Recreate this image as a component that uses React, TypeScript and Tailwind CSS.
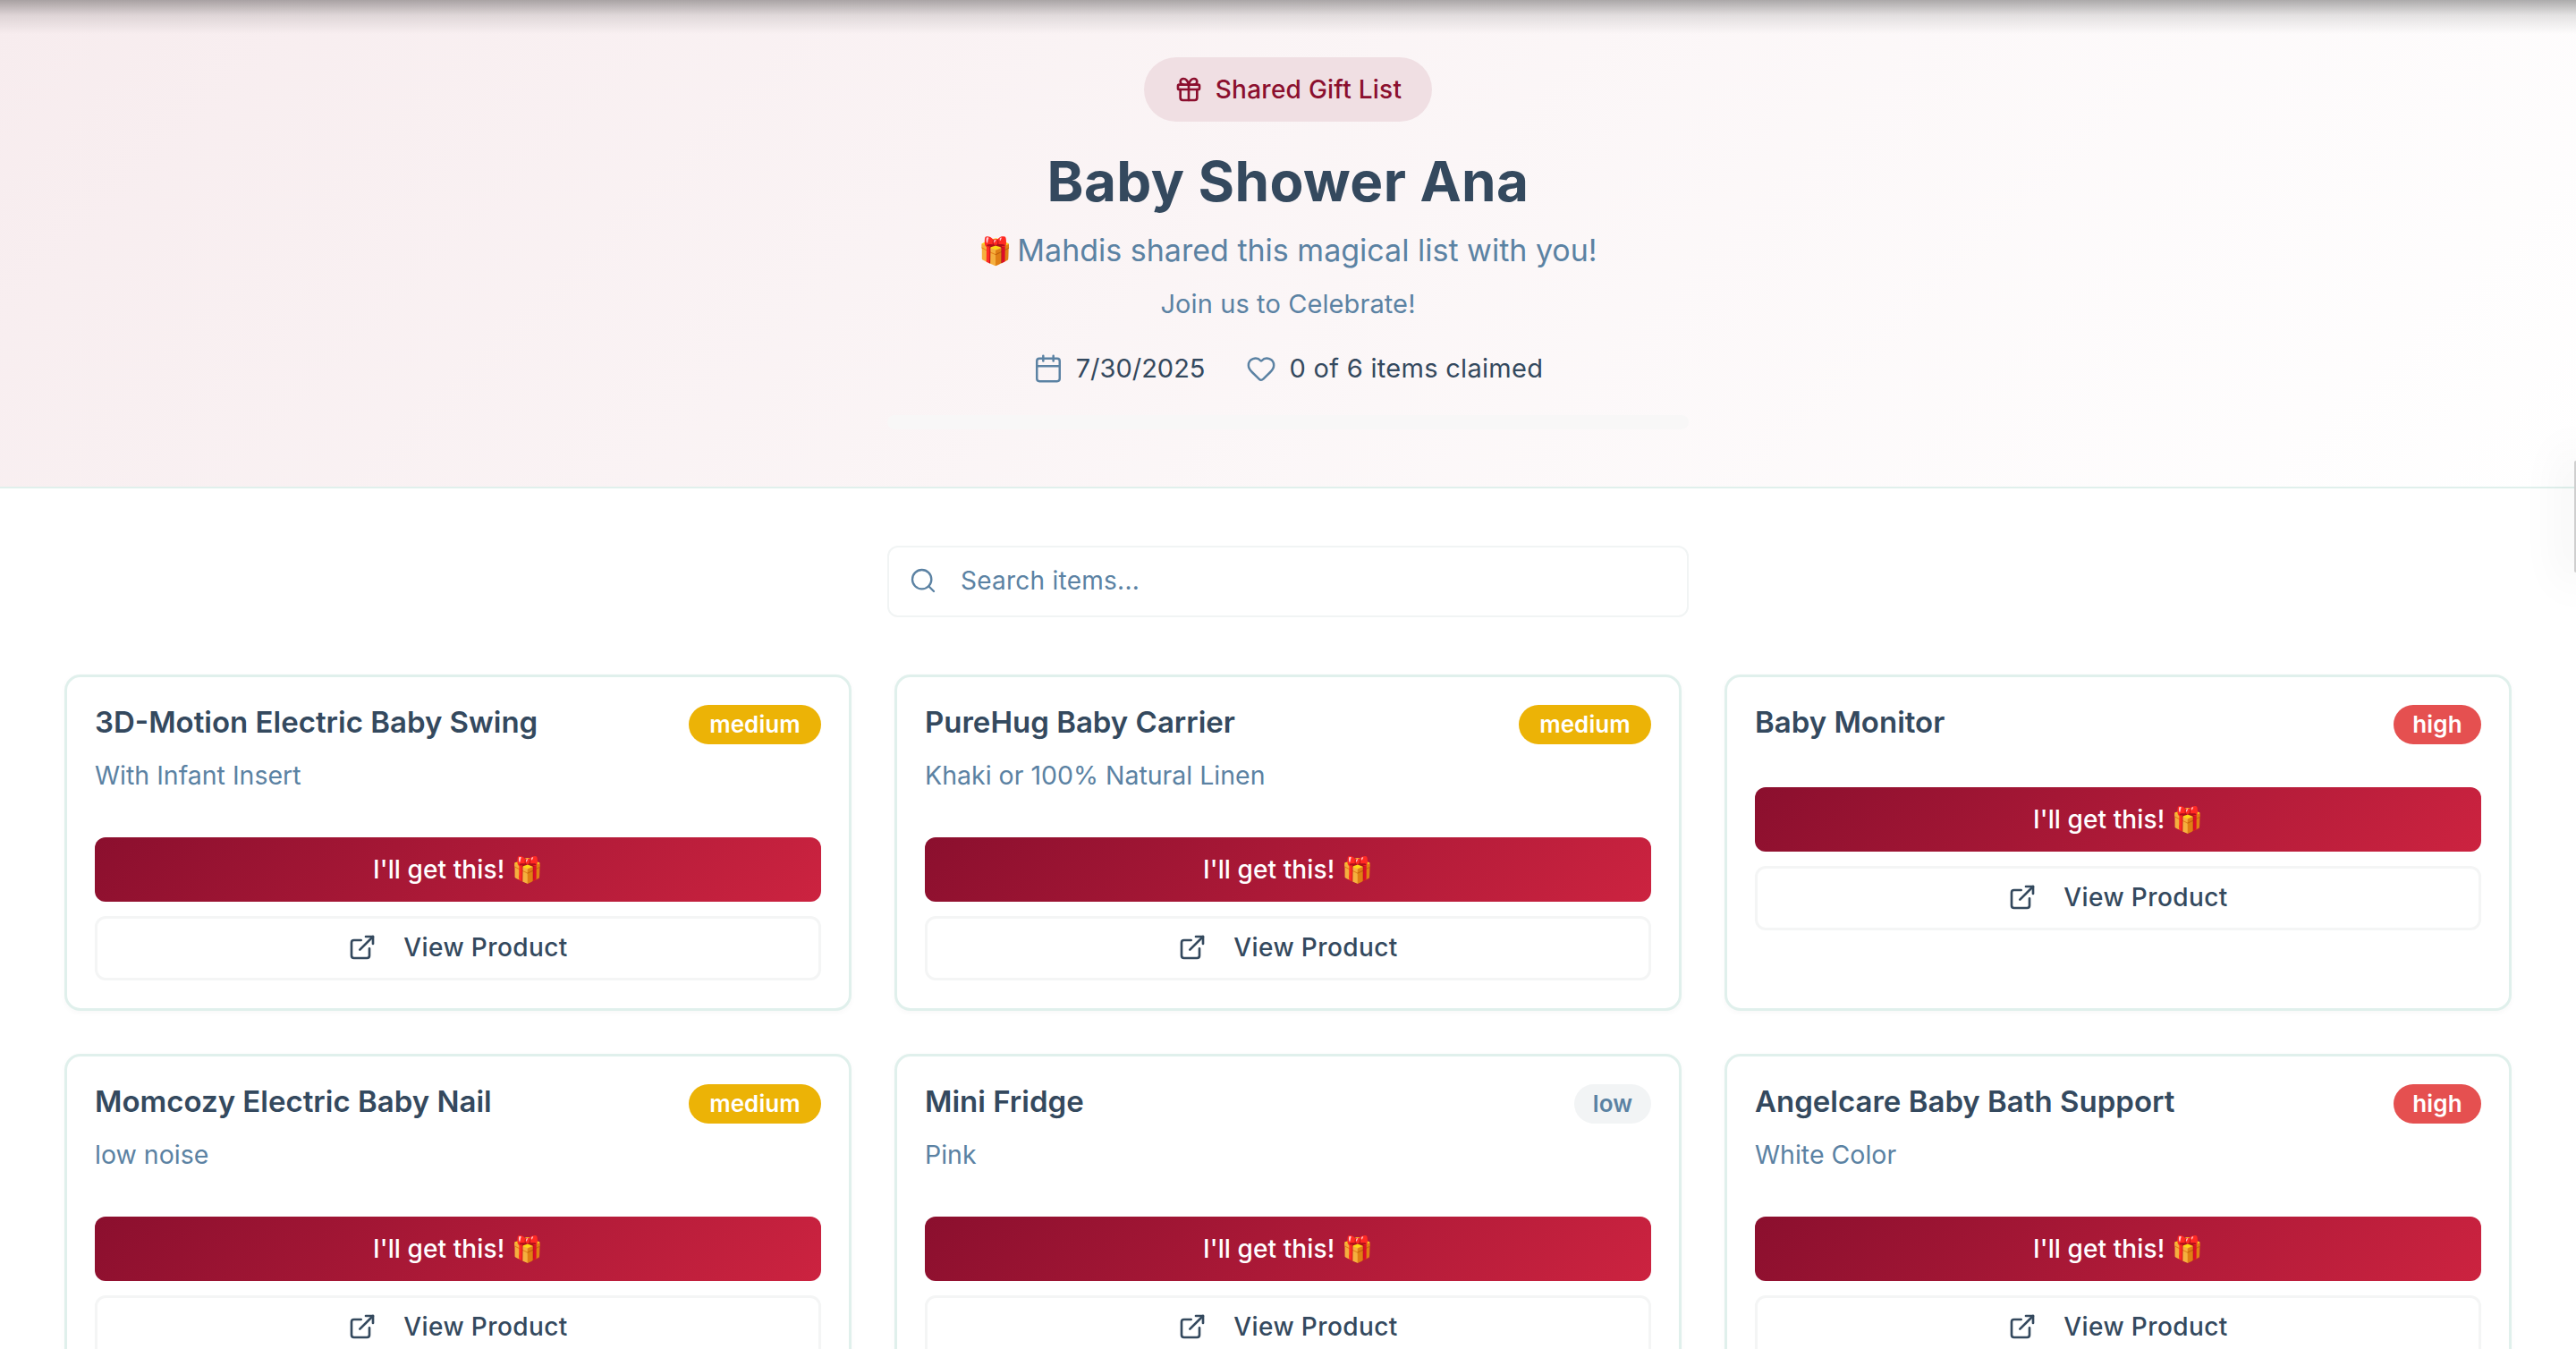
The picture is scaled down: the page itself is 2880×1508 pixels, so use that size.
import { Gift, Calendar, Heart, Search, ExternalLink } from "lucide-react";

type Priority = "medium" | "high" | "low";
const items: { title: string; desc?: string; priority: Priority }[] = [
  { title: "3D-Motion Electric Baby Swing", desc: "With Infant Insert", priority: "medium" },
  { title: "PureHug Baby Carrier", desc: "Khaki or 100% Natural Linen", priority: "medium" },
  { title: "Baby Monitor", priority: "high" },
  { title: "Momcozy Electric Baby Nail", desc: "low noise", priority: "medium" },
  { title: "Mini Fridge", desc: "Pink", priority: "low" },
  { title: "Angelcare Baby Bath Support", desc: "White Color", priority: "high" },
];

const badge: Record<Priority, string> = {
  medium: "bg-[#ecb306] text-white w-[148px]",
  high: "bg-[#e55050] text-white w-[98px]",
  low: "bg-[#f2f4f5] text-[#5b82a3] w-[86px]",
};

function Card({ title, desc, priority }: { title: string; desc?: string; priority: Priority }) {
  return (
    <div className="rounded-[18px] border-[3px] border-[#e0f0ec] bg-white p-[31px] shadow-[0_2px_6px_rgba(0,0,0,0.03)]">
      <div className="flex h-[44px] items-start justify-between">
        <h3 className="text-[33px] leading-[38px] font-semibold text-[#34495e]">{title}</h3>
        <span className={`flex h-[44px] items-center justify-center rounded-full pb-[2px] text-[26px] font-semibold tracking-[0.1px] ${badge[priority]}`}>
          {priority}
        </span>
      </div>
      {desc && <p className="mt-3 h-[44px] pt-[1px] text-[28.5px] leading-[44px] text-[#5b82a3]">{desc}</p>}
      <button className="mt-12 flex h-[72px] w-full items-center justify-center rounded-[12px] bg-[linear-gradient(135deg,#8b0f2e,#cc2340)] text-[28px] font-medium tracking-[0.1px] text-white">
        I'll get this! 🎁
      </button>
      <button className="mt-4 flex h-[72px] w-full items-center justify-center gap-[30px] rounded-[12px] border-[3px] border-[#f4f5f5] bg-white pb-[2px] text-[28px] font-medium tracking-[0.4px] text-[#34495e]">
        <ExternalLink className="h-[32px] w-[32px]" strokeWidth={2} />
        View Product
      </button>
    </div>
  );
}

export default function App() {
  return (
    <div className="relative h-[1508px] overflow-hidden bg-white font-['Inter','Noto_Sans',sans-serif]">
      <header className="flex h-[546px] flex-col items-center border-b-2 border-[#e0f0ec] bg-[linear-gradient(135deg,#f7ecee,#ffffff)] pt-[64px]">
        <div className="flex h-[72px] w-[322px] items-center justify-center gap-[14px] rounded-full bg-[#f0dfe3] text-[28px] font-medium tracking-[0.25px] text-[#8b0f2e]">
          <Gift className="h-[32px] w-[32px]" strokeWidth={2} />
          Shared Gift List
        </div>
        <h1 className="mt-[31px] text-[62px] leading-[72px] font-bold tracking-[0.4px] text-[#34495e]">Baby Shower Ana</h1>
        <p className="mt-[17px] flex items-center gap-[6px] text-[34px] leading-[48px] text-[#5b82a3]">
          <span className="text-[30px]">🎁</span>
          Mahdis shared this magical list with you!
        </p>
        <p className="mt-[14px] text-[29px] leading-[44px] tracking-[0.1px] text-[#5b82a3]">Join us to Celebrate!</p>
        <div className="mt-[28px] flex items-center gap-[46px] text-[29px] leading-[44px] text-[#34495e]">
          <span className="flex items-center gap-[14px]">
            <Calendar className="h-[34px] w-[34px] text-[#5b82a3]" strokeWidth={1.75} />
            7/30/2025
          </span>
          <span className="flex items-center gap-[14px] tracking-[0.3px]">
            <Heart className="h-[34px] w-[34px] text-[#5b82a3]" strokeWidth={1.75} />
            0 of 6 items claimed
          </span>
        </div>
        <div className="mt-[30px] h-[16px] w-[896px] rounded-full bg-[#f8f7f7]" />
      </header>

      <main className="px-[72px] pt-[64px]">
        <div className="mx-auto flex h-[80px] w-[896px] items-center gap-[26px] rounded-[12px] border-2 border-[#f1f4f4] bg-white pb-[2px] pl-[22px] text-[28px] tracking-[0.25px] text-[#5b82a3]">
          <Search className="h-[32px] w-[32px]" strokeWidth={1.75} />
          Search items...
        </div>
        <div className="mt-[64px] grid grid-cols-3 gap-12">
          {items.map((it) => (
            <Card key={it.title} {...it} />
          ))}
        </div>
      </main>

      <div className="pointer-events-none absolute inset-x-0 top-0 h-[38px] bg-[linear-gradient(to_bottom,rgba(0,0,0,0.32),rgba(0,0,0,0.1)_45%,rgba(0,0,0,0))]" />
      <div className="pointer-events-none absolute top-[515px] right-0 h-[125px] w-[2px] rounded-l bg-[#cfcfcf] shadow-[0_0_50px_14px_rgba(0,0,0,0.05)]" />
    </div>
  );
}
